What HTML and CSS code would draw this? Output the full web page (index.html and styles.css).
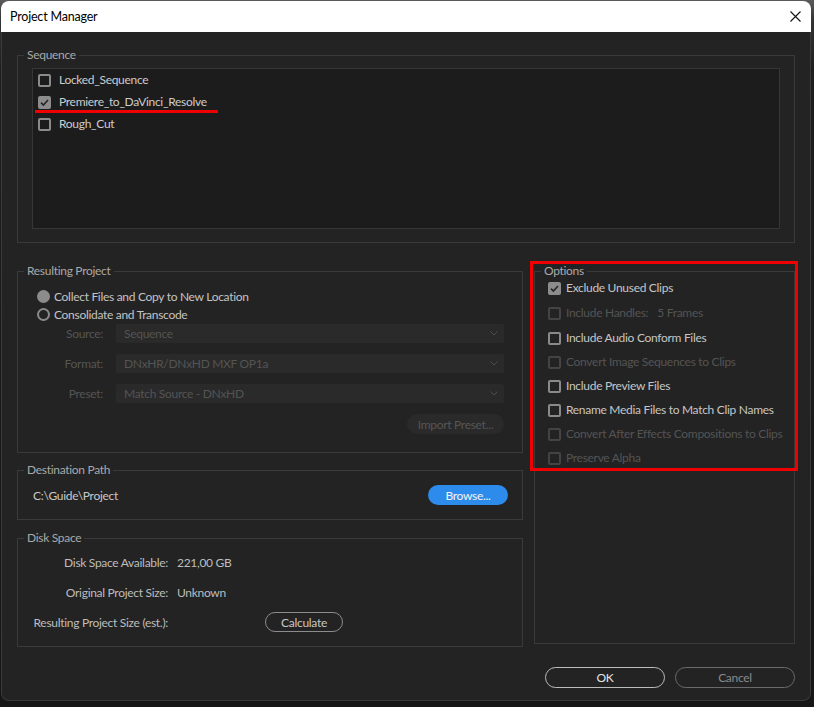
FILE: index.html
```html
<!DOCTYPE html>
<html>
<head>
<meta charset="utf-8">
<title>Project Manager</title>
<link rel="stylesheet" href="styles.css">
</head>
<body>
<div class="window">
  <div class="titlebar">
    <span class="title">Project Manager</span>
    <svg class="close" width="11" height="11" viewBox="0 0 11 11"><path d="M0.5 0.5 L10.5 10.5 M10.5 0.5 L0.5 10.5" stroke="#111" stroke-width="1.1" fill="none"/></svg>
  </div>
  <div class="main">
    <fieldset class="group">
      <legend>Sequence</legend>
      <div class="gbody seq">
        <div class="list">
          <div class="item"><span class="cb"></span><span>Locked_Sequence</span></div>
          <div class="item mark"><span class="cb on"><svg width="9" height="9" viewBox="0 0 9 9"><path d="M1 4.6 L3.4 7 L8 2" stroke="#262626" stroke-width="1.6" fill="none"/></svg></span><span>Premiere_to_DaVinci_Resolve</span><span class="redline"></span></div>
          <div class="item"><span class="cb"></span><span>Rough_Cut</span></div>
        </div>
      </div>
    </fieldset>

    <div class="cols">
      <div class="left">
        <fieldset class="group">
          <legend>Resulting Project</legend>
          <div class="gbody result">
            <div class="radio-row"><span class="radio on"></span><span>Collect Files and Copy to New Location</span></div>
            <div class="radio-row"><span class="radio"></span><span>Consolidate and Transcode</span></div>
            <div class="form">
              <span class="flabel">Source:</span>
              <div class="select"><span>Sequence</span><svg width="8" height="5" viewBox="0 0 8 5"><path d="M0.5 0.5 L4 4 L7.5 0.5" stroke="#4e4e4e" fill="none"/></svg></div>
              <span class="flabel">Format:</span>
              <div class="select"><span>DNxHR/DNxHD MXF OP1a</span><svg width="8" height="5" viewBox="0 0 8 5"><path d="M0.5 0.5 L4 4 L7.5 0.5" stroke="#4e4e4e" fill="none"/></svg></div>
              <span class="flabel">Preset:</span>
              <div class="select"><span>Match Source - DNxHD</span><svg width="8" height="5" viewBox="0 0 8 5"><path d="M0.5 0.5 L4 4 L7.5 0.5" stroke="#4e4e4e" fill="none"/></svg></div>
            </div>
            <div class="import-row"><button class="btn import">Import Preset...</button></div>
          </div>
        </fieldset>

        <fieldset class="group dest">
          <legend>Destination Path</legend>
          <div class="gbody dest-body">
            <div class="dest-row"><span>C:\Guide\Project</span><button class="btn browse">Browse...</button></div>
          </div>
        </fieldset>

        <fieldset class="group disk">
          <legend>Disk Space</legend>
          <div class="gbody disk-body">
            <div class="disk-grid">
              <span class="dlabel">Disk Space Available:</span><span>221,00 GB</span>
              <span class="dlabel">Original Project Size:</span><span>Unknown</span>
              <span class="dlabel">Resulting Project Size (est.):</span><span><button class="btn calc">Calculate</button></span>
            </div>
          </div>
        </fieldset>
      </div>

      <div class="right">
        <fieldset class="group">
          <legend>Options</legend>
          <div class="gbody options">
            <div class="opt r1"><span class="cb on"><svg width="9" height="9" viewBox="0 0 9 9"><path d="M1 4.6 L3.4 7 L8 2" stroke="#262626" stroke-width="1.6" fill="none"/></svg></span><span>Exclude Unused Clips</span></div>
            <div class="opt r2 off"><span class="cb"></span><span>Include Handles:</span><span class="frames">5 Frames</span></div>
            <div class="opt r3"><span class="cb"></span><span>Include Audio Conform Files</span></div>
            <div class="opt off"><span class="cb"></span><span>Convert Image Sequences to Clips</span></div>
            <div class="opt"><span class="cb"></span><span>Include Preview Files</span></div>
            <div class="opt"><span class="cb"></span><span>Rename Media Files to Match Clip Names</span></div>
            <div class="opt off"><span class="cb"></span><span>Convert After Effects Compositions to Clips</span></div>
            <div class="opt off"><span class="cb"></span><span>Preserve Alpha</span></div>
          </div>
        </fieldset>
        <div class="redbox"></div>
      </div>
    </div>

    <div class="footer">
      <button class="btn ok">OK</button>
      <button class="btn cancel">Cancel</button>
    </div>
  </div>
</div>
</body>
</html>
```
FILE: styles.css
```css
* { box-sizing: border-box; }
html, body { margin: 0; padding: 0; }
body {
  width: 814px;
  height: 707px;
  overflow: hidden;
  background: linear-gradient(#5a5a5a 0, #343434 20px, #1e1e1e 70px, #161616 100%);
  font-family: Lato, "Open Sans", sans-serif;
  font-size: 12px;
  letter-spacing: -0.3px;
  color: #c6c6c6;
}
.window {
  margin: 1px 0 0 1px;
  width: 810px;
  height: 700px;
  display: flex;
  flex-direction: column;
}
.titlebar {
  height: 31px;
  flex: none;
  background: #ffffff;
  border-radius: 8px 8px 0 0;
  display: flex;
  align-items: center;
  justify-content: space-between;
  padding: 0 10px 0 9px;
  color: #000;
  font-size: 12.5px;
  letter-spacing: -0.2px;
}
.close { display: block; }
.main {
  flex: 1;
  background: #232323;
  border: 1px solid #3a3a3a;
  border-top: 0;
  border-radius: 0 0 8px 8px;
  padding: 16px 15px 12px 15px;
}
.group {
  margin: 0;
  padding: 0;
  border: 1px solid #3a3a3a;
  min-width: 0;
}
legend {
  padding: 0 3px;
  margin-left: 6px;
  line-height: 14px;
  font-size: 12px;
  color: #a9a9a9;
}
.seq { padding: 6px 14px 13px 14px; }
.list {
  height: 161px;
  background: #1c1c1c;
  border: 1px solid #363636;
  padding: 0 5px;
}
.item {
  height: 22px;
  display: flex;
  align-items: center;
  gap: 8px;
  color: #cdcdcd;
  padding-bottom: 1px;
}
.item.mark { position: relative; }
.redline {
  position: absolute;
  left: -3px;
  top: 19px;
  width: 183px;
  height: 3px;
  background: #f00000;
}
.cb {
  width: 13px;
  height: 13px;
  flex: none;
  border: 2px solid #8a8a8a;
  border-radius: 2px;
  display: flex;
  align-items: center;
  justify-content: center;
}
.item .cb, .opt .cb { margin-top: 1px; }
.cb.on { background: #8c8c8c; border-color: #8c8c8c; }
.cb svg { display: block; }

.cols {
  display: grid;
  grid-template-columns: 506px 261px;
  column-gap: 11px;
  margin-top: 21px;
  align-items: start;
}
.left { display: flex; flex-direction: column; }

.result { padding: 9px 18px 18px 19px; }
.radio-row {
  height: 18px;
  display: flex;
  align-items: center;
  gap: 4px;
  color: #c4c4c4;
}
.radio {
  width: 13px;
  height: 13px;
  flex: none;
  border-radius: 50%;
  border: 2px solid #8a8a8a;
}
.radio.on { background: #8c8c8c; border-color: #8c8c8c; }
.form {
  margin-top: 1px;
  display: grid;
  grid-template-columns: 66px 388px;
  column-gap: 13px;
  row-gap: 11px;
  align-items: center;
}
.flabel { text-align: right; color: #555; }
.select {
  height: 19px;
  background: #2a2a2a;
  border-radius: 2px;
  display: flex;
  align-items: center;
  justify-content: space-between;
  padding: 0 6px 0 8px;
  color: #545454;
}
.select svg { display: block; }
.import-row {
  margin-top: 11px;
  display: flex;
  justify-content: flex-end;
}
.btn {
  font-family: inherit;
  font-size: 12px;
  letter-spacing: -0.3px;
  height: 20px;
  padding: 0;
  border-radius: 10px;
  background: transparent;
  cursor: default;
}
.import {
  width: 97px;
  background: #2a2a2a;
  border: 0;
  color: #565656;
}

.group.dest { margin-top: 10px; }
.dest-body { padding: 8px 14px 14px 15px; }
.dest-row {
  height: 20px;
  display: flex;
  align-items: center;
  justify-content: space-between;
  color: #c8c8c8;
}
.browse {
  width: 80px;
  background: #2d8ceb;
  border: 0;
  color: #f4f4f4;
}

.group.disk { margin-top: 11px; }
.disk-body { padding: 7px 14px 14px 15px; }
.disk-grid {
  display: grid;
  grid-template-columns: 135px auto;
  column-gap: 9px;
  grid-auto-rows: 20px;
  row-gap: 10px;
  align-items: center;
  color: #bdbdbd;
}
.dlabel { text-align: right; white-space: nowrap; }
.calc {
  display: block;
  margin-left: 88px;
  width: 78px;
  border: 1.5px solid #8c8c8c;
  color: #c8c8c8;
}

.right { position: relative; }
.options { padding: 0 0 175px 13px; }
.opt {
  height: 20px;
  margin-top: 4px;
  display: flex;
  align-items: center;
  gap: 5px;
  color: #c6c6c6;
  padding-bottom: 1px;
}
.opt.r1 { margin-top: 0; }
.opt.r2, .opt.r3 { margin-top: 5px; }
.opt.off { color: #545454; }
.opt.off .cb { border-color: #444; }
.frames { margin-left: 4px; }
.redbox {
  position: absolute;
  left: -4px;
  top: -3px;
  width: 268px;
  height: 210px;
  border: 3px solid #f00000;
}

.footer {
  margin-top: 20px;
  display: flex;
  justify-content: flex-end;
  gap: 10px;
}
.ok, .cancel { width: 120px; height: 21px; border-radius: 11px; }
.ok { border: 1.5px solid #bcbcbc; color: #e4e4e4; }
.cancel { border: 1.5px solid #6a6a6a; color: #8a8a8a; }
```
